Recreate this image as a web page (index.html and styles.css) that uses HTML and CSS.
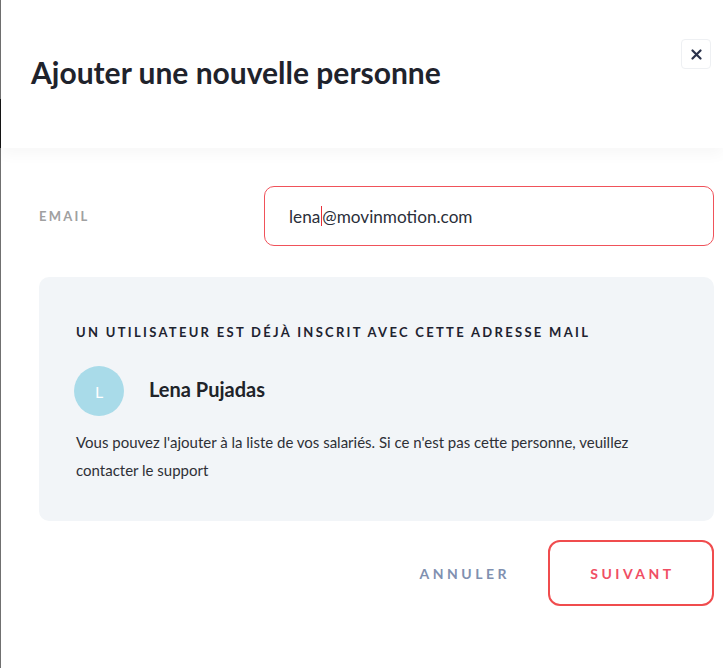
FILE: index.html
```html
<!DOCTYPE html>
<html lang="fr">

<head>
    <meta charset="UTF-8">
    <meta name="viewport" content="width=device-width, initial-scale=1.0">
    <title>Ajouter une nouvelle personne</title>
    <link rel="stylesheet" href="styles.css">
</head>

<body>
    <div class="modal">
        <!-- Header -->
        <div class="modal-header">
            <h1 class="modal-title">Ajouter une nouvelle personne</h1>
            <button class="close-btn" aria-label="Fermer">
                <svg width="11" height="11" viewBox="0 0 11 11">
                    <path d="M1.5 1.5 L9.5 9.5 M9.5 1.5 L1.5 9.5" stroke="#29314a" stroke-width="2.2" stroke-linecap="round" />
                </svg>
            </button>
        </div>

        <div class="modal-body">
            <!-- Email row -->
            <div class="form-row">
                <label class="form-label">Email</label>
                <div class="field">lena<span class="caret"></span>@movinmotion.com</div>
            </div>

            <!-- Existing user notice -->
            <div class="notice">
                <h2 class="notice-title">Un utilisateur est déjà inscrit avec cette adresse mail</h2>
                <div class="user">
                    <div class="avatar">L</div>
                    <span class="user-name">Lena Pujadas</span>
                </div>
                <p class="notice-text">Vous pouvez l'ajouter à la liste de vos salariés. Si ce n'est pas cette personne, veuillez contacter le support</p>
            </div>

            <!-- Actions -->
            <div class="actions">
                <button class="btn-cancel">Annuler</button>
                <button class="btn-next">Suivant</button>
            </div>
        </div>
    </div>
</body>

</html>
```

FILE: styles.css
```css
/* General reset */
* {
    margin: 0;
    padding: 0;
    box-sizing: border-box;
}

body {
    font-family: 'Lato', 'Liberation Sans', sans-serif;
    background: #fff;
    height: 100vh;
    overflow: hidden;
    /* thin backdrop edge on the left */
    background-image: linear-gradient(to bottom, #707070 99px, #151515 99px, #151515 148px, #707070 148px);
    background-repeat: no-repeat;
    background-size: 1px 100%;
}

.modal {
    margin-left: 1px;
    height: 100%;
    background: #fff;
}

/* Header */
.modal-header {
    height: 148px;
    display: flex;
    justify-content: space-between;
    align-items: center;
    padding: 0 12px 0 30px;
    background: #fff;
    position: relative;
    z-index: 1;
    box-shadow: 0 6px 14px rgba(0, 0, 0, 0.035);
}

.modal-title {
    font-size: 30px;
    font-weight: 700;
    color: #1f232c;
    margin-top: -4px;
}

.close-btn {
    align-self: flex-start;
    margin-top: 39px;
    width: 30px;
    height: 30px;
    display: flex;
    align-items: center;
    justify-content: center;
    background: #fff;
    border: 1px solid #eef0f3;
    border-radius: 4px;
    cursor: pointer;
}

/* Body */
.modal-body {
    padding: 38px 9px 0 38px;
}

.form-row {
    display: flex;
    align-items: center;
}

.form-label {
    width: 225px;
    font-size: 13px;
    font-weight: 700;
    letter-spacing: 2.2px;
    text-transform: uppercase;
    color: #a0a0a0;
}

.field {
    flex: 1;
    height: 60px;
    display: flex;
    align-items: center;
    padding-left: 24px;
    border: 1px solid #f0525a;
    border-radius: 10px;
    font-size: 17.2px;
    color: #2b2f3a;
}

.caret {
    display: inline-block;
    width: 1px;
    height: 20px;
    background: #e8303a;
    margin: 0 0 0 1px;
}

/* Notice box */
.notice {
    margin-top: 31px;
    background: #f2f5f8;
    border-radius: 10px;
    padding: 47px 37px 37px 37px;
}

.notice-title {
    font-size: 13px;
    line-height: 16px;
    font-weight: 700;
    letter-spacing: 2.3px;
    text-transform: uppercase;
    color: #1e2330;
}

.user {
    display: flex;
    align-items: center;
    gap: 25px;
    margin-top: 26px;
    margin-left: -2px;
}

.avatar {
    width: 50px;
    height: 50px;
    border-radius: 50%;
    background: #a9dbe9;
    color: #fff;
    display: flex;
    align-items: center;
    justify-content: center;
    font-size: 16px;
}

.user-name {
    font-size: 20px;
    font-weight: 700;
    color: #202329;
    margin-top: -4px;
}

.notice-text {
    margin-top: 12px;
    font-size: 15px;
    line-height: 28px;
    color: #2e3036;
}

/* Buttons */
.actions {
    display: flex;
    justify-content: flex-end;
    align-items: center;
    margin-top: 19px;
}

.actions button {
    font-family: 'Lato', 'Liberation Sans', sans-serif;
    font-size: 14px;
    font-weight: 700;
    letter-spacing: 3.5px;
    text-transform: uppercase;
    background: none;
    cursor: pointer;
}

.btn-cancel {
    border: none;
    color: #8090b0;
    margin-right: 38px;
}

.btn-next {
    width: 166px;
    height: 66px;
    border: 2px solid #f04c4e;
    border-radius: 12px;
    color: #f04e64;
    padding-left: 3px;
}
```
